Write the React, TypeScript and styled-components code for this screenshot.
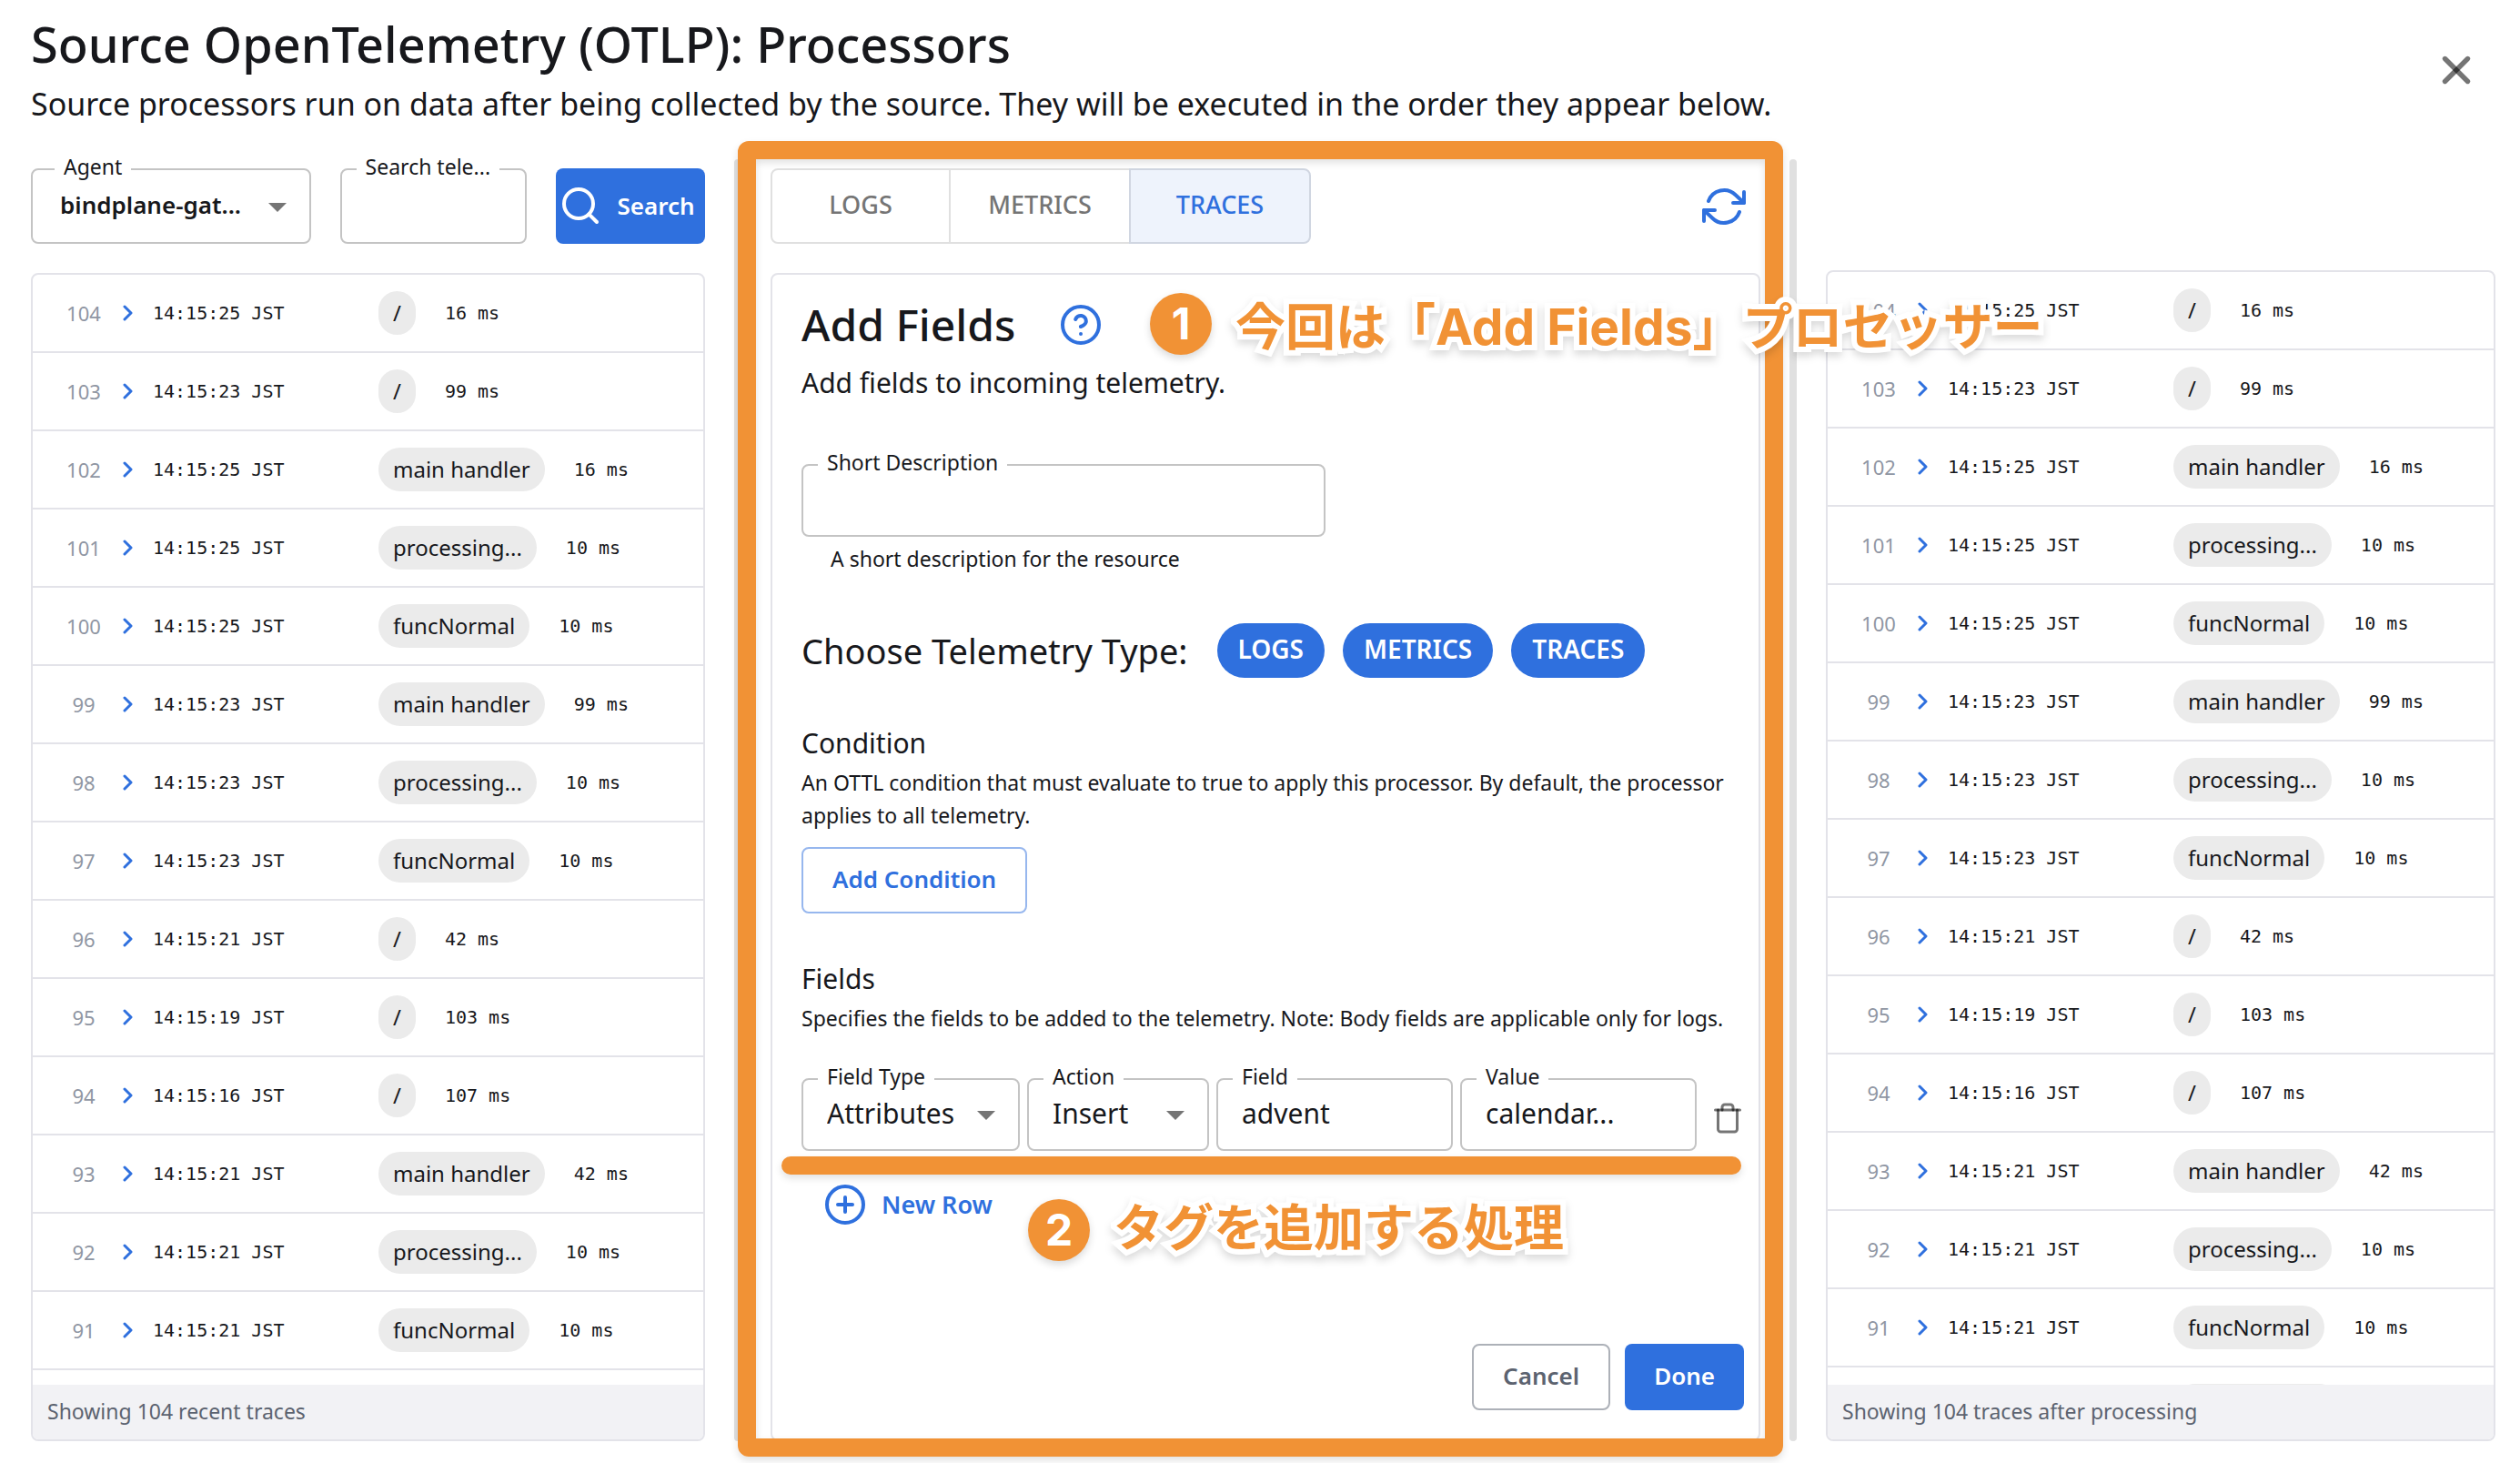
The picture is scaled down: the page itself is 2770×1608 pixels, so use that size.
import React, { useId, useState } from "react";
import styled, { createGlobalStyle, css } from "styled-components";

const color = {
  ink: "#17181c",
  muted: "#5c6370",
  faint: "#8f96a3",
  grey: "#757575",
  icon: "rgba(0, 0, 0, 0.54)",
  line: "#e3e3e9",
  outline: "#c4c4c4",
  chip: "#ebebeb",
  footer: "#f2f2f5",
  blue: "#2f70de",
  orange: "#f19235",
};

const GlobalStyle = createGlobalStyle`
  *, *::before, *::after { box-sizing: border-box; }
  body {
    margin: 0;
    background: #fff;
    color: ${color.ink};
    font-family: "Noto Sans", "Noto Sans CJK JP", sans-serif;
  }
  button, input, select { font: inherit; color: inherit; }
  button { cursor: pointer; }
  h1, h2, h3, p { margin: 0; font-weight: 400; }
`;

/* ---------- page ---------- */

const Page = styled.main`
  display: flex;
  flex-direction: column;
  height: 100vh;
  padding: 16px 27px 24px 34px;
  overflow: hidden;
`;

const Header = styled.header`
  display: flex;
  align-items: center;
  justify-content: space-between;
  padding-right: 18px;
`;

const HeaderText = styled.div`
  display: flex;
  flex-direction: column;
  gap: 10px;
`;

const PageTitle = styled.h1`
  font-size: 54px;
  line-height: 64px;
  font-weight: 500;
`;

const PageSubtitle = styled.p`
  font-size: 34px;
  line-height: 48px;
`;

const IconButton = styled.button<{ $color?: string }>`
  display: inline-flex;
  align-items: center;
  justify-content: center;
  padding: 0;
  border: 0;
  background: none;
  color: ${(p) => p.$color ?? color.blue};
`;

const Columns = styled.div`
  flex: 1;
  min-height: 0;
  display: grid;
  grid-template-columns:
    minmax(0, 741fr) 8px minmax(0, 1088fr) 8px minmax(0, 736fr);
  grid-template-rows: minmax(0, 1fr);
  gap: 32px;
  margin-top: 37px;
`;

const Divider = styled.div`
  border-radius: 4px;
  background: #e0e0e0;
`;

const Column = styled.section<{ $top: number }>`
  position: relative;
  display: flex;
  flex-direction: column;
  gap: 32px;
  min-height: 0;
  padding-top: ${(p) => p.$top}px;
`;

const Toolbar = styled.div`
  display: flex;
  align-items: center;
  gap: 32px;
  height: 83px;
`;

const RefreshSlot = styled.div`
  display: flex;
  flex: 1;
  justify-content: flex-end;
  padding-right: 16px;
`;

/* ---------- buttons ---------- */

const Button = styled.button<{ $kind: "solid" | "outline" | "neutral" }>`
  display: inline-flex;
  align-items: center;
  justify-content: center;
  height: 73px;
  padding: 0 32px 4px;
  border-radius: 8px;
  font-size: 26px;
  font-weight: 600;
  white-space: nowrap;
  ${(p) =>
    p.$kind === "solid" &&
    css`
      border: 0;
      background: ${color.blue};
      color: #fff;
    `}
  ${(p) =>
    p.$kind === "outline" &&
    css`
      border: 2px solid #97b7ee;
      background: #fff;
      color: ${color.blue};
    `}
  ${(p) =>
    p.$kind === "neutral" &&
    css`
      border: 2px solid #adb1b8;
      background: #fff;
      color: ${color.muted};
    `}
`;

const SearchButton = styled(Button)`
  flex: 0 0 164px;
  height: 83px;
  gap: 16px;
  padding: 0 8px 2px 0;
`;

const TextButton = styled.button`
  display: inline-flex;
  align-items: center;
  gap: 16px;
  padding: 0 24px;
  border: 0;
  background: none;
  color: ${color.blue};
  font-size: 27px;
  line-height: 48px;
  font-weight: 600;
`;

const Toggle = styled.div`
  display: grid;
  grid-template-columns: repeat(3, 198px);
  height: 83px;
`;

const ToggleButton = styled.button<{ $on: boolean }>`
  margin-left: -2px;
  padding: 0 0 4px;
  border: 2px solid ${(p) => (p.$on ? "#d0d6e1" : "#e0e0e0")};
  background: ${(p) => (p.$on ? "#eef3fc" : "#fff")};
  color: ${(p) => (p.$on ? color.blue : color.grey)};
  font-size: 27px;
  font-weight: 500;
  &:first-child {
    margin-left: 0;
    border-radius: 8px 0 0 8px;
  }
  &:last-child {
    border-radius: 0 8px 8px 0;
  }
`;

/* ---------- outlined fields ---------- */

const FieldBox = styled.div<{ $height?: number }>`
  position: relative;
  display: flex;
  height: ${(p) => p.$height ?? 80}px;
  min-width: 0;
`;

const FieldLabel = styled.label<{ $left?: number }>`
  position: absolute;
  top: -14px;
  left: ${(p) => p.$left ?? 18}px;
  padding: 0 10px;
  background: #fff;
  font-size: 23px;
  line-height: 24px;
  white-space: nowrap;
`;

const control = css`
  width: 100%;
  min-width: 0;
  border: 2px solid ${color.outline};
  border-radius: 8px;
  background: #fff;
  outline: none;
`;

const Input = styled.input`
  ${control}
  padding: 0 26px 4px;
  font-size: 30px;
`;

const Select = styled.select<{ $strong?: boolean }>`
  ${control}
  appearance: none;
  padding: 0 28px 4px ${(p) => (p.$strong ? 30 : 26)}px;
  font-size: ${(p) => (p.$strong ? 26 : 30)}px;
  font-weight: ${(p) => (p.$strong ? 600 : 400)};
`;

const Caret = styled.svg`
  position: absolute;
  top: 50%;
  right: 27px;
  width: 20px;
  height: 10px;
  margin-top: -4px;
  fill: ${color.grey};
  pointer-events: none;
`;

const AgentBox = styled(FieldBox)`
  flex: 307 1 0;
`;

const QueryBox = styled(FieldBox)`
  flex: 205 1 0;
`;

/* ---------- trace list ---------- */

const ListCard = styled.div`
  display: flex;
  flex-direction: column;
  flex: 1;
  min-height: 0;
  border: 2px solid ${color.line};
  border-radius: 8px;
  overflow: hidden;
`;

const ListBody = styled.div`
  flex: 1;
  min-height: 0;
  overflow: hidden;
`;

const ListFooter = styled.div`
  padding: 0 16px 2px;
  background: ${color.footer};
  color: ${color.muted};
  font-size: 23px;
  line-height: 58px;
`;

const Table = styled.table`
  width: 100%;
  table-layout: fixed;
  border-collapse: separate;
  border-spacing: 0;
`;

const Cell = styled.td<{ $width?: number }>`
  width: ${(p) => (p.$width ? `${p.$width}px` : "auto")};
  height: 86px;
  padding: 0;
  border-bottom: 2px solid ${color.line};
  vertical-align: middle;
`;

const NumberCell = styled(Cell)`
  padding-left: 28px;
  color: ${color.faint};
  font-size: 22px;
  text-align: center;
`;

const ToggleCell = styled(Cell)`
  text-align: center;
  line-height: 0;
`;

const TimeCell = styled(Cell)`
  padding-left: 6px;
  font-family: "DejaVu Sans Mono", monospace;
  font-size: 20px;
`;

const SpanInfo = styled.div`
  display: flex;
  align-items: center;
  gap: 32px;
  font-family: "DejaVu Sans Mono", monospace;
  font-size: 20px;
`;

const NamePill = styled.span`
  padding: 0 16px;
  border-radius: 24px;
  background: ${color.chip};
  font-family: "Noto Sans", sans-serif;
  font-size: 24px;
  line-height: 48px;
`;

const PendingRow = styled.div`
  display: flex;
  padding: 18px 0 0 380px;
`;

const PendingPill = styled.div`
  width: 184px;
  height: 48px;
  border-radius: 24px;
  background: ${color.chip};
`;

/* ---------- processor form ---------- */

const Card = styled.form`
  display: flex;
  flex-direction: column;
  align-items: flex-start;
  flex: 1;
  min-height: 0;
  padding: 31px 16px 32px 32px;
  border: 2px solid ${color.line};
  border-radius: 8px;
`;

const CardHead = styled.div`
  position: relative;
  display: flex;
  align-items: center;
  gap: 48px;
`;

const CardTitle = styled.h2`
  font-size: 48px;
  line-height: 48px;
  font-weight: 500;
`;

const CardText = styled.p`
  margin-top: 20px;
  font-size: 30px;
  line-height: 40px;
`;

const Description = styled.div`
  width: calc(100% * 5 / 9);
  margin-top: 69px;
`;

const Hint = styled.p`
  padding: 4px 32px 0;
  font-size: 23px;
  line-height: 40px;
`;

const TypeRow = styled.div`
  display: flex;
  align-items: center;
  gap: 20px;
  margin-top: 51px;
`;

const TypeTitle = styled.h3`
  margin-right: 12px;
  font-size: 38px;
  line-height: 56px;
`;

const Chip = styled.button`
  height: 60px;
  padding: 0 23px 4px;
  border: 0;
  border-radius: 30px;
  background: ${color.blue};
  color: #fff;
  font-size: 28px;
  font-weight: 600;
`;

const Section = styled.section`
  width: 100%;
  margin-top: 52px;
`;

const SectionTitle = styled.h3`
  font-size: 30px;
  line-height: 40px;
`;

const SectionText = styled.p`
  margin-top: 5px;
  font-size: 23px;
  line-height: 36px;
`;

const ConditionButton = styled(Button)`
  margin-top: 17px;
`;

const FieldLine = styled.div`
  position: relative;
  display: flex;
  align-items: center;
  gap: 16px;
  margin-top: 48px;
`;

const FieldGrid = styled.div`
  flex: 1;
  display: grid;
  grid-template-columns:
    minmax(0, 240fr) minmax(0, 200fr) minmax(0, 260fr)
    minmax(0, 260fr);
  gap: 8px;
`;

const TrashButton = styled(IconButton)`
  padding-top: 8px;
`;

const NewRowLine = styled.div`
  position: relative;
  display: flex;
  margin-top: 35px;
`;

const Actions = styled.div`
  display: flex;
  align-self: flex-end;
  gap: 16px;
  margin-top: auto;
`;

/* ---------- annotations drawn over the dialog ---------- */

const Frame = styled.div`
  position: absolute;
  z-index: 1;
  inset: -20px -25px -17px -36px;
  border: 20px solid ${color.orange};
  border-radius: 12px;
  box-shadow: 0 4px 8px rgba(0, 0, 0, 0.12), inset 0 4px 8px rgba(0, 0, 0, 0.12);
  pointer-events: none;
`;

const Underline = styled.div`
  position: absolute;
  z-index: 2;
  top: 86px;
  left: -22px;
  right: 3px;
  height: 20px;
  border-radius: 10px;
  background: ${color.orange};
  box-shadow: 0 4px 8px rgba(0, 0, 0, 0.12);
`;

const Callout = styled.div<{
  $left: number;
  $top: number;
  $align: "flex-start" | "flex-end";
}>`
  position: absolute;
  z-index: 2;
  left: ${(p) => p.$left}px;
  top: ${(p) => p.$top}px;
  display: flex;
  align-items: ${(p) => p.$align};
  gap: 26px;
  color: ${color.orange};
  font-family: "Inter", "Noto Sans CJK JP", sans-serif;
  font-weight: 700;
  white-space: nowrap;
  pointer-events: none;
`;

const CalloutNumber = styled.span`
  width: 68px;
  border-radius: 50%;
  background: ${color.orange};
  box-shadow: 0 4px 8px rgba(0, 0, 0, 0.15);
  color: #fff;
  font-size: 48px;
  line-height: 68px;
  text-align: center;
`;

const CalloutText = styled.span`
  font-size: 55px;
  line-height: 62px;
  -webkit-text-stroke: 12px #fff;
  paint-order: stroke fill;
  stroke-linejoin: round;
  filter: drop-shadow(0 5px 4px rgba(0, 0, 0, 0.14));
`;

/* ---------- icons ---------- */

const Icon = styled.svg<{ $size: number; $stroke?: number }>`
  flex: none;
  width: ${(p) => p.$size}px;
  height: ${(p) => p.$size}px;
  fill: none;
  stroke: currentColor;
  stroke-width: ${(p) => p.$stroke ?? 2};
  stroke-linecap: round;
  stroke-linejoin: round;
`;

const CloseIcon = () => (
  <Icon $size={50} $stroke={2.6} viewBox="0 0 24 24">
    <path d="M18 6 6 18" />
    <path d="m6 6 12 12" />
  </Icon>
);

const SearchIcon = () => (
  <Icon $size={48} viewBox="0 0 24 24">
    <circle cx="11" cy="11" r="8" />
    <path d="m21 21-4.35-4.35" />
  </Icon>
);

const RefreshIcon = () => (
  <Icon $size={48} viewBox="0 0 24 24">
    <path d="M23 4v6h-6M1 20v-6h6" />
    <path d="M3.51 9a9 9 0 0 1 14.85-3.36L23 10M1 14l4.64 4.36A9 9 0 0 0 20.49 15" />
  </Icon>
);

const HelpIcon = () => (
  <Icon $size={48} viewBox="0 0 24 24">
    <circle cx="12" cy="12" r="10" />
    <path d="M9.09 9a3 3 0 0 1 5.83 1c0 2-3 3-3 3M12 17h.01" />
  </Icon>
);

const PlusIcon = () => (
  <Icon $size={48} viewBox="0 0 24 24">
    <circle cx="12" cy="12" r="10" />
    <path d="M12 8v8M8 12h8" />
  </Icon>
);

const ChevronIcon = () => (
  <Icon $size={18} $stroke={3} viewBox="0 0 18 18">
    <path d="m5 2 7 7-7 7" />
  </Icon>
);

const TrashIcon = () => (
  <Icon $size={36} viewBox="0 0 24 24">
    <path d="M3 6h18" />
    <path d="M19 6v14a2 2 0 0 1-2 2H7a2 2 0 0 1-2-2V6m3 0V4a2 2 0 0 1 2-2h4a2 2 0 0 1 2 2v2" />
  </Icon>
);

/* ---------- parts ---------- */

type Trace = { id: number; time: string; name: string; ms: number };

const traces: Trace[] = [
  { id: 104, time: "14:15:25", name: "/", ms: 16 },
  { id: 103, time: "14:15:23", name: "/", ms: 99 },
  { id: 102, time: "14:15:25", name: "main handler", ms: 16 },
  { id: 101, time: "14:15:25", name: "processing...", ms: 10 },
  { id: 100, time: "14:15:25", name: "funcNormal", ms: 10 },
  { id: 99, time: "14:15:23", name: "main handler", ms: 99 },
  { id: 98, time: "14:15:23", name: "processing...", ms: 10 },
  { id: 97, time: "14:15:23", name: "funcNormal", ms: 10 },
  { id: 96, time: "14:15:21", name: "/", ms: 42 },
  { id: 95, time: "14:15:19", name: "/", ms: 103 },
  { id: 94, time: "14:15:16", name: "/", ms: 107 },
  { id: 93, time: "14:15:21", name: "main handler", ms: 42 },
  { id: 92, time: "14:15:21", name: "processing...", ms: 10 },
  { id: 91, time: "14:15:21", name: "funcNormal", ms: 10 },
];

function TraceList({ footer }: { footer: string }) {
  return (
    <ListCard>
      <ListBody>
        <Table aria-label={footer}>
          <tbody>
            {traces.map((t) => (
              <tr key={t.id}>
                <NumberCell $width={84}>{t.id}</NumberCell>
                <ToggleCell $width={42}>
                  <IconButton type="button" aria-label={`Expand trace ${t.id}`}>
                    <ChevronIcon />
                  </IconButton>
                </ToggleCell>
                <TimeCell $width={254}>{t.time} JST</TimeCell>
                <Cell>
                  <SpanInfo>
                    <NamePill>{t.name}</NamePill>
                    <span>{t.ms} ms</span>
                  </SpanInfo>
                </Cell>
              </tr>
            ))}
          </tbody>
        </Table>
        {/* the next trace, scrolled out below the footer */}
        <PendingRow aria-hidden="true">
          <PendingPill />
        </PendingRow>
      </ListBody>
      <ListFooter>{footer}</ListFooter>
    </ListCard>
  );
}

function TextField({ label, initial = "" }: { label: string; initial?: string }) {
  const id = useId();
  const [value, setValue] = useState(initial);
  return (
    <FieldBox>
      <Input id={id} value={value} onChange={(e) => setValue(e.target.value)} />
      <FieldLabel htmlFor={id}>{label}</FieldLabel>
    </FieldBox>
  );
}

function CaretIcon() {
  return (
    <Caret viewBox="0 0 20 10" aria-hidden="true">
      <path d="M0 0h20L10 10z" />
    </Caret>
  );
}

function SelectField({ label, options }: { label: string; options: string[] }) {
  const id = useId();
  return (
    <FieldBox>
      <Select id={id}>
        {options.map((o) => (
          <option key={o}>{o}</option>
        ))}
      </Select>
      <CaretIcon />
      <FieldLabel htmlFor={id}>{label}</FieldLabel>
    </FieldBox>
  );
}

const kinds = ["LOGS", "METRICS", "TRACES"];

export default function App() {
  const [tab, setTab] = useState("TRACES");
  return (
    <Page>
      <GlobalStyle />
      <Header>
        <HeaderText>
          <PageTitle>Source OpenTelemetry (OTLP): Processors</PageTitle>
          <PageSubtitle>
            Source processors run on data after being collected by the source.
            They will be executed in the order they appear below.
          </PageSubtitle>
        </HeaderText>
        <IconButton type="button" aria-label="Close" $color={color.icon}>
          <CloseIcon />
        </IconButton>
      </Header>

      <Columns>
        <Column $top={10}>
          <Toolbar>
            <AgentBox $height={83}>
              <Select id="agent" $strong>
                <option>bindplane-gat...</option>
              </Select>
              <CaretIcon />
              <FieldLabel htmlFor="agent" $left={26}>
                Agent
              </FieldLabel>
            </AgentBox>
            <QueryBox $height={83}>
              <Input id="query" />
              <FieldLabel htmlFor="query">Search tele...</FieldLabel>
            </QueryBox>
            <SearchButton type="button" $kind="solid">
              <SearchIcon />
              Search
            </SearchButton>
          </Toolbar>
          <TraceList footer="Showing 104 recent traces" />
        </Column>

        <Divider />

        <Column $top={10}>
          <Toolbar>
            <Toggle role="group" aria-label="Telemetry">
              {kinds.map((k) => (
                <ToggleButton
                  key={k}
                  type="button"
                  $on={k === tab}
                  aria-pressed={k === tab}
                  onClick={() => setTab(k)}
                >
                  {k}
                </ToggleButton>
              ))}
            </Toggle>
            <RefreshSlot>
              <IconButton type="button" aria-label="Refresh">
                <RefreshIcon />
              </IconButton>
            </RefreshSlot>
          </Toolbar>

          <Card onSubmit={(e) => e.preventDefault()}>
            <CardHead>
              <CardTitle>Add Fields</CardTitle>
              <IconButton type="button" aria-label="Help">
                <HelpIcon />
              </IconButton>
              <Callout $left={383} $top={-11} $align="flex-end">
                <CalloutNumber>1</CalloutNumber>
                <CalloutText>今回は「Add Fields」プロセッサー</CalloutText>
              </Callout>
            </CardHead>
            <CardText>Add fields to incoming telemetry.</CardText>

            <Description>
              <TextField label="Short Description" />
              <Hint>A short description for the resource</Hint>
            </Description>

            <TypeRow>
              <TypeTitle>Choose Telemetry Type:</TypeTitle>
              {kinds.map((k) => (
                <Chip key={k} type="button" aria-pressed="true">
                  {k}
                </Chip>
              ))}
            </TypeRow>

            <Section>
              <SectionTitle>Condition</SectionTitle>
              <SectionText>
                An OTTL condition that must evaluate to true to apply this
                processor. By default, the processor applies to all telemetry.
              </SectionText>
              <ConditionButton type="button" $kind="outline">
                Add Condition
              </ConditionButton>
            </Section>

            <Section>
              <SectionTitle>Fields</SectionTitle>
              <SectionText>
                Specifies the fields to be added to the telemetry. Note: Body
                fields are applicable only for logs.
              </SectionText>
              <FieldLine>
                <FieldGrid>
                  <SelectField label="Field Type" options={["Attributes"]} />
                  <SelectField label="Action" options={["Insert"]} />
                  <TextField label="Field" initial="advent" />
                  <TextField label="Value" initial="calendar..." />
                </FieldGrid>
                <TrashButton
                  type="button"
                  aria-label="Delete row"
                  $color={color.icon}
                >
                  <TrashIcon />
                </TrashButton>
                <Underline />
              </FieldLine>
              <NewRowLine>
                <TextButton type="button">
                  <PlusIcon />
                  New Row
                </TextButton>
                <Callout $left={249} $top={18} $align="flex-start">
                  <CalloutNumber>2</CalloutNumber>
                  <CalloutText>タグを追加する処理</CalloutText>
                </Callout>
              </NewRowLine>
            </Section>

            <Actions>
              <Button type="button" $kind="neutral">
                Cancel
              </Button>
              <Button type="submit" $kind="solid">
                Done
              </Button>
            </Actions>
          </Card>
          <Frame />
        </Column>

        <Divider />

        <Column $top={122}>
          <TraceList footer="Showing 104 traces after processing" />
        </Column>
      </Columns>
    </Page>
  );
}
